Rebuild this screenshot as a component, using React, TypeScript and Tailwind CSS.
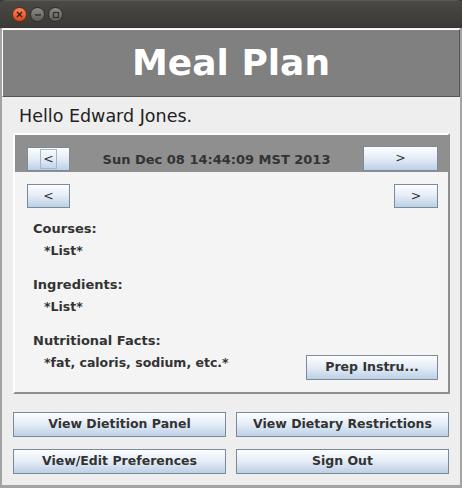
import React from "react";

const font = { fontFamily: '"DejaVu Sans", Verdana, sans-serif' };

function JButton({ children, className = "" }: { children?: React.ReactNode; className?: string }) {
  return (
    <div
      className={
        "flex items-center justify-center border border-[#7a8a99] bg-gradient-to-b from-[#fdfeff] via-[#e3ecf6] to-[#bcd0e6] text-[12.5px] font-bold text-[#333333] leading-none " +
        className
      }
    >
      {children}
    </div>
  );
}

export default function App() {
  return (
    <div className="w-[462px] h-[488px] flex flex-col bg-[#3c3b37] overflow-hidden" style={font}>
      {/* title bar */}
      <div className="h-[28px] shrink-0 flex items-center pl-[12px] gap-[3px] rounded-t-[6px] bg-gradient-to-b from-[#4a4945] to-[#3a3935] border-t border-[#5b5a56]">
        <div className="w-[15px] h-[15px] rounded-full bg-gradient-to-b from-[#f7845a] to-[#d9461b] border border-[#6b2a12] flex items-center justify-center">
          <svg width="7" height="7" viewBox="0 0 7 7">
            <path d="M1 1 L6 6 M6 1 L1 6" stroke="#3a1a0c" strokeWidth="1.4" />
          </svg>
        </div>
        <div className="w-[15px] h-[15px] rounded-full bg-gradient-to-b from-[#8b8a86] to-[#5e5d59] border border-[#2e2d2a] flex items-center justify-center">
          <svg width="8" height="8" viewBox="0 0 8 8">
            <path d="M1 4 L7 4" stroke="#2f2e2b" strokeWidth="1.4" />
          </svg>
        </div>
        <div className="w-[15px] h-[15px] rounded-full bg-gradient-to-b from-[#8b8a86] to-[#5e5d59] border border-[#2e2d2a] flex items-center justify-center">
          <svg width="8" height="8" viewBox="0 0 8 8">
            <rect x="1.5" y="1.5" width="5" height="5" fill="none" stroke="#2f2e2b" strokeWidth="1.2" />
          </svg>
        </div>
      </div>

      {/* window body */}
      <div className="flex-1 flex flex-col bg-[#eeeeee] border-l-2 border-r-2 border-b-[3px] border-[#a3a3a3]">
        {/* header */}
        <div className="mt-[1px] h-[68px] shrink-0 flex items-center justify-center bg-[#808080] border-t border-l border-white border-b border-r border-b-[#555555] border-r-[#555555]">
          <span className="text-[36px] font-bold text-white leading-none">Meal Plan</span>
        </div>

        {/* hello */}
        <div className="pl-[17px] pt-[9px] h-[36px] text-[17.5px] leading-[20px] font-medium text-[#222222]">Hello Edward Jones.</div>

        {/* panel */}
        <div className="ml-[11px] w-[437px] flex flex-col bg-[#f4f4f4] border-2 border-t-white border-l-white border-r-[#8e8e8e] border-b-[#8e8e8e]">
          {/* band */}
          <div className="h-[37px] flex items-end justify-between pl-[12px] pr-[10px] pb-[1px] bg-[#8f8f8f]">
            <JButton className="w-[43px] h-[24px]">
              <span className="border border-[#a3b8cc] px-[2px] py-[3px] font-normal">&lt;</span>
            </JButton>
            <div className="flex-1 self-center pt-[13px] text-center text-[13px] font-bold text-[#333333] leading-none">
              Sun Dec 08 14:44:09 MST 2013
            </div>
            <JButton className="w-[75px] h-[25px] font-normal">&gt;</JButton>
          </div>

          <div className="mt-[12px] flex justify-between pl-[12px] pr-[10px]">
            <JButton className="w-[43px] h-[24px] font-normal">&lt;</JButton>
            <JButton className="w-[44px] h-[24px] font-normal">&gt;</JButton>
          </div>

          <div className="mt-[13px] pl-[18px] pr-[10px] pb-[12px] flex flex-col text-[13px] font-bold text-[#333333] leading-[16px]">
            <div>Courses:</div>
            <div className="mt-[6px] pl-[11px] text-[12.5px]">*List*</div>
            <div className="mt-[18px]">Ingredients:</div>
            <div className="mt-[6px] pl-[11px] text-[12.5px]">*List*</div>
            <div className="mt-[18px]">Nutritional Facts:</div>
            <div className="mt-[6px] pl-[11px] flex justify-between items-start text-[12.5px]">
              <span>*fat, caloris, sodium, etc.*</span>
              <JButton className="w-[132px] h-[25px]">Prep Instru...</JButton>
            </div>
          </div>
        </div>

        {/* bottom buttons */}
        <div className="mt-[18px] ml-[11px] w-[436px] grid grid-cols-2 gap-x-[10px] gap-y-[12px]">
          <JButton className="h-[25px]">View Dietition Panel</JButton>
          <JButton className="h-[25px]">View Dietary Restrictions</JButton>
          <JButton className="h-[25px]">View/Edit Preferences</JButton>
          <JButton className="h-[25px]">Sign Out</JButton>
        </div>
      </div>
    </div>
  );
}
